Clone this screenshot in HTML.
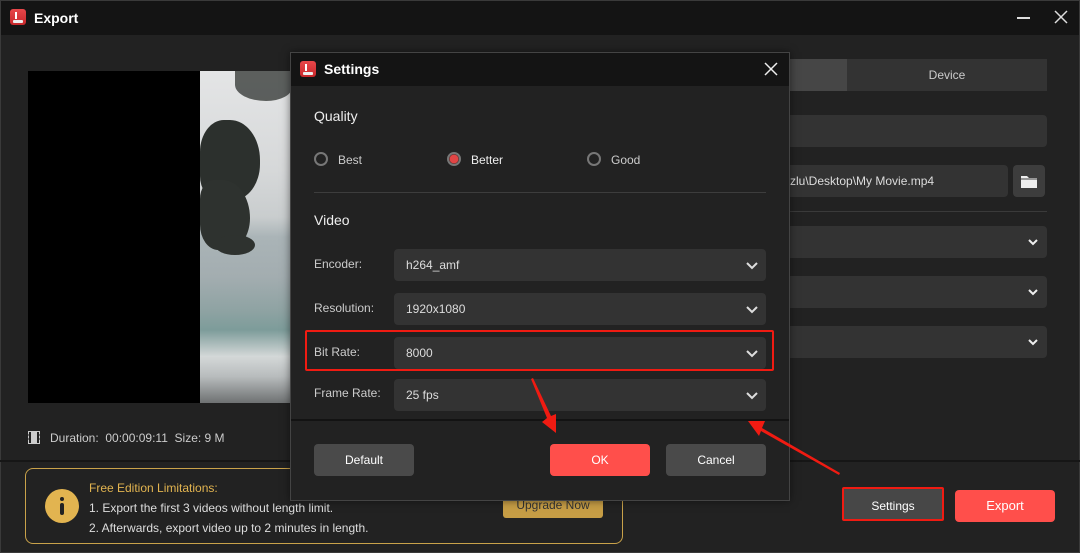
<!DOCTYPE html>
<html><head><meta charset="utf-8"><style>
*{margin:0;padding:0;box-sizing:border-box}
body{width:1080px;height:553px;background:#222;font-family:"Liberation Sans",sans-serif;color:#ddd;position:relative;overflow:hidden;font-size:12px}
.abs{position:absolute}
.sel{position:absolute;background:#333;border-radius:4px;height:32px}
.chev{position:absolute;right:8px;top:10px;width:12px;height:12px}
.btn{position:absolute;border-radius:4px;text-align:center;color:#fff;font-size:13px}
.logo{position:absolute;width:16px;height:16px;border-radius:3px;background:linear-gradient(#e8474a,#c6282b)}
.logo:after{content:"";position:absolute;left:3px;right:3px;bottom:2px;height:3px;background:#eee;border-radius:1px}
.logo:before{content:"";position:absolute;left:5px;top:3px;width:2px;height:7px;background:#fff}
</style></head><body>
<div class="abs" style="left:0;top:0;width:1080px;height:553px;border:1px solid #3a3a3a"></div>
<div class="abs" style="left:1px;top:1px;width:1078px;height:34px;background:#141414"></div>
<div class="logo" style="left:10px;top:9px"></div>
<div class="abs" style="left:34px;top:10px;font-size:14px;font-weight:bold;color:#fff">Export</div>
<div class="abs" style="left:1017px;top:17px;width:13px;height:1.5px;background:#ddd"></div>
<svg class="abs" style="left:1054px;top:10px" width="14" height="14"><path d="M1 1L13 13M13 1L1 13" stroke="#ddd" stroke-width="1.5"/></svg>
<!-- preview -->
<div class="abs" style="left:28px;top:71px;width:172px;height:332px;background:#000"></div>
<div class="abs" style="left:200px;top:71px;width:92px;height:332px;background:linear-gradient(180deg,#e4e5e6 0%,#d6d8d9 30%,#c9cdce 44%,#aab4b7 50%,#a3adb0 62%,#8fa3a3 72%,#7d9c9a 78%,#d4d8d8 86%,#b8bcbd 92%,#6e7172 100%)"></div>
<div class="abs" style="left:200px;top:120px;width:60px;height:80px;background:#2c302d;border-radius:40% 50% 45% 30%"></div>
<div class="abs" style="left:200px;top:180px;width:50px;height:70px;background:#2e322f;border-radius:30% 60% 50% 40%"></div>
<div class="abs" style="left:215px;top:235px;width:40px;height:20px;background:#2e322f;border-radius:50%"></div>
<div class="abs" style="left:235px;top:71px;width:57px;height:30px;background:#3a3d3b;border-radius:0 0 50% 60%;opacity:.8"></div>
<svg class="abs" style="left:28px;top:431px" width="12" height="13"><rect x="0.5" y="0.5" width="11" height="12" fill="none" stroke="#ccc"/><rect x="3" y="1" width="6" height="11" fill="#ccc"/><path d="M0 4h3M0 8h3M9 4h3M9 8h3" stroke="#222"/></svg>
<div class="abs" style="left:50px;top:431px;color:#ccc">Duration:&nbsp; 00:00:09:11&nbsp; Size: 9 M</div>
<div class="abs" style="left:0;top:460px;width:1080px;height:2px;background:#161616"></div>
<!-- right panel -->
<div class="abs" style="left:790px;top:59px;width:57px;height:32px;background:#464646"></div>
<div class="abs" style="left:847px;top:59px;width:200px;height:32px;background:#333;text-align:center;line-height:32px;color:#ccc">Device</div>
<div class="abs" style="left:790px;top:115px;width:257px;height:32px;background:#333;border-radius:0 4px 4px 0"></div>
<div class="abs" style="left:790px;top:165px;width:218px;height:32px;background:#333;border-radius:0 4px 4px 0;line-height:32px;color:#ddd">zlu\Desktop\My Movie.mp4</div>
<div class="abs" style="left:1013px;top:165px;width:32px;height:32px;background:#3d3d3d;border-radius:4px"></div>
<svg class="abs" style="left:1021px;top:175px" width="16" height="13"><path d="M0 1h6l2 2h8v10H0z" fill="#eee"/><path d="M0 4h16" stroke="#3d3d3d"/></svg>
<div class="abs" style="left:790px;top:211px;width:257px;height:1px;background:#3a3a3a"></div>
<div class="abs" style="left:790px;top:226px;width:257px;height:32px;background:#333;border-radius:0 4px 4px 0"></div>
<div class="abs" style="left:790px;top:276px;width:257px;height:32px;background:#333;border-radius:0 4px 4px 0"></div>
<div class="abs" style="left:790px;top:326px;width:257px;height:32px;background:#333;border-radius:0 4px 4px 0"></div>
<svg class="abs" style="left:1027px;top:236px" width="12" height="12"><path d="M2 4l4 4 4-4" fill="none" stroke="#eee" stroke-width="2"/></svg>
<svg class="abs" style="left:1027px;top:286px" width="12" height="12"><path d="M2 4l4 4 4-4" fill="none" stroke="#eee" stroke-width="2"/></svg>
<svg class="abs" style="left:1027px;top:336px" width="12" height="12"><path d="M2 4l4 4 4-4" fill="none" stroke="#eee" stroke-width="2"/></svg>
<!-- bottom bar -->
<div class="abs" style="left:25px;top:468px;width:598px;height:76px;border:1px solid #c9a24a;border-radius:8px"></div>
<div class="abs" style="left:45px;top:489px;width:34px;height:34px;border-radius:50%;background:#e2b450"></div>
<div class="abs" style="left:60px;top:497px;width:4px;height:4px;border-radius:50%;background:#222"></div>
<div class="abs" style="left:60px;top:503px;width:4px;height:12px;border-radius:2px;background:#222"></div>
<div class="abs" style="left:89px;top:481px;color:#e2b450">Free Edition Limitations:</div>
<div class="abs" style="left:89px;top:501px;color:#ddd">1. Export the first 3 videos without length limit.</div>
<div class="abs" style="left:89px;top:521px;color:#ddd">2. Afterwards, export video up to 2 minutes in length.</div>
<div class="abs" style="left:503px;top:492px;width:100px;height:26px;background:#c69d45;border-radius:3px;color:#333;text-align:center;line-height:26px">Upgrade Now</div>
<div class="btn" style="left:842px;top:487px;width:102px;height:34px;background:#474747;border:2px solid #f01b12;line-height:34px;font-size:12px;border-radius:2px">Settings</div>
<div class="btn" style="left:955px;top:490px;width:100px;height:32px;background:#ff4f4b;line-height:32px">Export</div>
<!-- dialog -->
<div class="abs" style="left:290px;top:52px;width:500px;height:449px;background:#222;border:1px solid #444;box-shadow:0 0 8px rgba(0,0,0,.5)"></div>
<div class="abs" style="left:291px;top:53px;width:498px;height:33px;background:#141414"></div>
<div class="logo" style="left:300px;top:61px"></div>
<div class="abs" style="left:324px;top:61px;font-size:14px;font-weight:bold;color:#fff">Settings</div>
<svg class="abs" style="left:764px;top:62px" width="14" height="14"><path d="M1 1L13 13M13 1L1 13" stroke="#eee" stroke-width="1.5"/></svg>
<div class="abs" style="left:314px;top:108px;font-size:14px;color:#eee">Quality</div>
<div class="abs" style="left:314px;top:152px;width:14px;height:14px;border-radius:50%;border:2px solid #777"></div>
<div class="abs" style="left:338px;top:153px;color:#ccc">Best</div>
<div class="abs" style="left:447px;top:152px;width:14px;height:14px;border-radius:50%;border:2px solid #777;background:radial-gradient(circle,#e14545 0 4px,transparent 5px)"></div>
<div class="abs" style="left:471px;top:153px;color:#eee">Better</div>
<div class="abs" style="left:587px;top:152px;width:14px;height:14px;border-radius:50%;border:2px solid #777"></div>
<div class="abs" style="left:611px;top:153px;color:#ccc">Good</div>
<div class="abs" style="left:314px;top:192px;width:452px;height:1px;background:#3d3d3d"></div>
<div class="abs" style="left:314px;top:212px;font-size:14px;color:#eee">Video</div>
<div class="abs" style="left:314px;top:257px;color:#ccc">Encoder:</div>
<div class="abs" style="left:314px;top:301px;color:#ccc">Resolution:</div>
<div class="abs" style="left:314px;top:345px;color:#ccc">Bit Rate:</div>
<div class="abs" style="left:314px;top:386px;color:#ccc">Frame Rate:</div>
<div class="sel" style="left:394px;top:249px;width:372px"><span class="abs" style="left:12px;top:9px;color:#ddd">h264_amf</span><svg class="chev"><path d="M1 4l5 5 5-5" fill="none" stroke="#ddd" stroke-width="2"/></svg></div>
<div class="sel" style="left:394px;top:293px;width:372px"><span class="abs" style="left:12px;top:9px;color:#ddd">1920x1080</span><svg class="chev"><path d="M1 4l5 5 5-5" fill="none" stroke="#ddd" stroke-width="2"/></svg></div>
<div class="sel" style="left:394px;top:337px;width:372px"><span class="abs" style="left:12px;top:9px;color:#ddd">8000</span><svg class="chev"><path d="M1 4l5 5 5-5" fill="none" stroke="#ddd" stroke-width="2"/></svg></div>
<div class="sel" style="left:394px;top:379px;width:372px"><span class="abs" style="left:12px;top:9px;color:#ddd">25 fps</span><svg class="chev"><path d="M1 4l5 5 5-5" fill="none" stroke="#ddd" stroke-width="2"/></svg></div>
<div class="abs" style="left:305px;top:330px;width:469px;height:41px;border:2px solid #f01b12;border-radius:2px"></div>
<div class="abs" style="left:291px;top:419px;width:498px;height:2px;background:#131313"></div>
<div class="btn" style="left:314px;top:444px;width:100px;height:32px;background:#4a4a4a;line-height:32px;font-size:12px">Default</div>
<div class="btn" style="left:550px;top:444px;width:100px;height:32px;background:#ff4f4b;line-height:32px;font-size:12px">OK</div>
<div class="btn" style="left:666px;top:444px;width:100px;height:32px;background:#4a4a4a;line-height:32px;font-size:12px">Cancel</div>
<svg class="abs" style="left:0;top:0" width="1080" height="553">
<polygon points="531,379 547,418 542,422 556,433 556,414 551,416 533,378" fill="#f01b12"/>
<polygon points="840,473 762,428 765,421 748,421 759,436 761,431 839,475" fill="#f01b12"/>
</svg>
</body></html>
